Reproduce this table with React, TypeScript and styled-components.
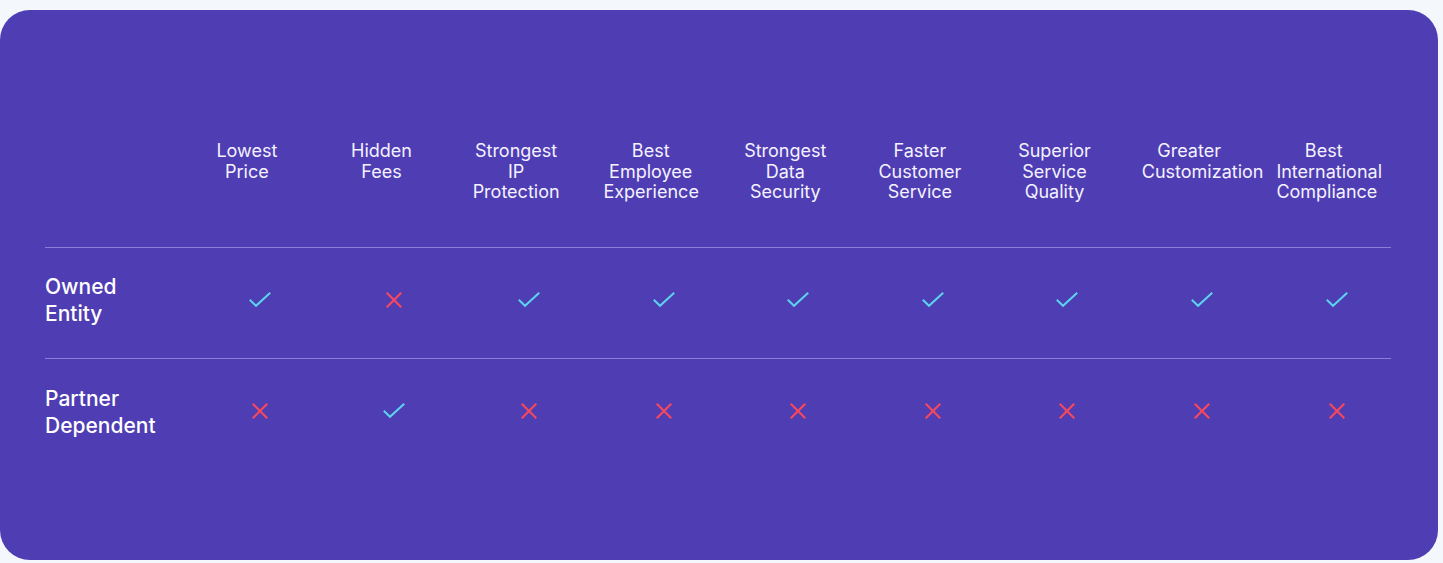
import React from "react";
import styled, { createGlobalStyle } from "styled-components";

const Global = createGlobalStyle`
  html, body { margin: 0; padding: 0; background: #f4f7fc; }
  body { font-family: Inter, "Noto Sans", sans-serif; }
  * { box-sizing: border-box; }
`;

const Page = styled.div`
  padding-top: 10px;
`;

const Card = styled.section`
  width: 1438px;
  height: 550px;
  background: #4f3db3;
  border-radius: 30px;
  padding: 131px 47px 0 45px;
  color: #ffffff;
`;

const Grid = styled.div`
  display: grid;
  grid-template-columns: repeat(10, 1fr);
`;

const HeadRow = styled.div`
  display: contents;
`;

const HeadCell = styled.div`
  padding: 0 20px 44px;
  font-size: 18px;
  line-height: 20.5px;
  font-weight: 400;
  text-align: center;
  color: #f4f2ff;
  min-width: 0;
  border-bottom: 1px solid #8a7fd6;
`;

const BodyRow = styled.div<{ $last?: boolean }>`
  display: contents;
  & > * {
    border-bottom: ${(p) => (p.$last ? "none" : "1px solid #8a7fd6")};
  }
`;

const RowLabel = styled.div`
  height: 111px;
  display: flex;
  align-items: center;
  font-size: 21px;
  line-height: 27px;
  font-weight: 500;
  color: #ffffff;
  padding-bottom: 5px;
`;

const IconCell = styled.div`
  height: 111px;
  display: flex;
  align-items: center;
  justify-content: center;
  padding-left: 26px;
  padding-bottom: 6px;
`;

const Check = () => (
  <svg width="22" height="16" viewBox="0 0 22 16" fill="none">
    <path d="M1.5 8.5 L7 13.8 L20.5 1.5" stroke="#5cd3ef" strokeWidth="2" strokeLinecap="square" />
  </svg>
);

const Cross = () => (
  <svg width="16" height="16" viewBox="0 0 16 16" fill="none">
    <path d="M1.5 1.5 L14.5 14.5 M14.5 1.5 L1.5 14.5" stroke="#f4485e" strokeWidth="2.2" strokeLinecap="square" />
  </svg>
);

const headers = [
  ["Lowest", "Price"],
  ["Hidden", "Fees"],
  ["Strongest", "IP", "Protection"],
  ["Best", "Employee", "Experience"],
  ["Strongest", "Data", "Security"],
  ["Faster", "Customer", "Service"],
  ["Superior", "Service", "Quality"],
  ["Greater", "Customization"],
  ["Best", "International", "Compliance"],
];

const rows: { label: string[]; values: boolean[] }[] = [
  { label: ["Owned", "Entity"], values: [true, false, true, true, true, true, true, true, true] },
  { label: ["Partner", "Dependent"], values: [false, true, false, false, false, false, false, false, false] },
];

export default function App() {
  return (
    <>
      <Global />
      <Page>
        <Card>
          <Grid>
            <HeadRow>
              <HeadCell />
              {headers.map((h, i) => (
                <HeadCell key={i}>
                  {h.map((line, j) => (
                    <div key={j}>{line}</div>
                  ))}
                </HeadCell>
              ))}
            </HeadRow>
            {rows.map((r, ri) => (
              <BodyRow key={ri} $last={ri === rows.length - 1}>
                <RowLabel>
                  <div>
                    {r.label.map((l, k) => (
                      <div key={k}>{l}</div>
                    ))}
                  </div>
                </RowLabel>
                {r.values.map((v, vi) => (
                  <IconCell key={vi}>{v ? <Check /> : <Cross />}</IconCell>
                ))}
              </BodyRow>
            ))}
          </Grid>
        </Card>
      </Page>
    </>
  );
}
